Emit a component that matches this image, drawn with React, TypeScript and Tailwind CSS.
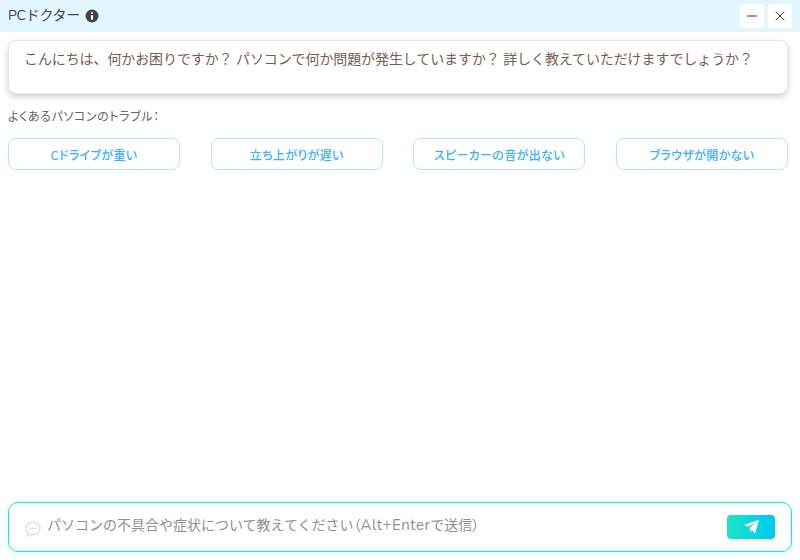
import { Minus, X } from 'lucide-react';

const troubles = ['Cドライブが重い', '立ち上がりが遅い', 'スピーカーの音が出ない', 'ブラウザが開かない'];

function InfoIcon() {
  return (
    <svg width="14" height="14" viewBox="0 0 14 14" className="shrink-0">
      <circle cx="7" cy="7" r="6.500" fill="#444444" />
      <rect x="6" y="6" width="2" height="4.800" rx=".4" fill="white" />
      <circle cx="7" cy="4" r="1.100" fill="white" />
    </svg>
  );
}

function ChatIcon() {
  return (
    <svg width="16" height="16" viewBox="0 0 16 16" fill="none" className="shrink-0">
      <path
        d="M8 1.2c3.8 0 7 2.7 7 6.2s-3.2 6.2-7 6.2c-.8 0-1.5-.1-2.2-.3L2.4 14.8l.7-3C1.8 10.700 1 9.100 1 7.400 1 3.900 4.200 1.200 8 1.200z"
        stroke="#dcdcdc"
        strokeWidth="1.3"
      />
      <circle cx="5.200" cy="7.400" r=".8" fill="#cfcfcf" />
      <circle cx="8" cy="7.400" r=".8" fill="#cfcfcf" />
      <circle cx="10.800" cy="7.400" r=".8" fill="#cfcfcf" />
    </svg>
  );
}

function SendIcon() {
  return (
    <svg width="15" height="14" viewBox="0 0 15 14" fill="white">
      <path d="M15 0 11 13.500 7.800 9.800 6.500 12.500 5.500 7.800 12 2.500 3.800 6.800 0 4.700z" />
    </svg>
  );
}

export default function App() {
  return (
    <div className="flex h-[560px] w-[800px] flex-col bg-white font-['Nunito','Noto_Sans_CJK_JP','Noto_Sans',sans-serif]">
      <header className="flex h-8 shrink-0 items-center justify-between bg-[#e1f6ff] pl-2 pr-[8px]">
        <div className="flex items-center gap-[5px]">
          <span className="text-sm tracking-[-0.25px] text-[#444444]">PCドクター</span>
          <InfoIcon />
        </div>
        <div className="flex gap-1">
          <button className="flex size-6 items-center justify-center rounded bg-white text-[#333333]">
            <Minus size={16} strokeWidth={1.5} />
          </button>
          <button className="flex size-6 items-center justify-center rounded bg-white text-[#333333]">
            <X size={16} strokeWidth={1.5} />
          </button>
        </div>
      </header>

      <main className="flex min-h-0 flex-1 flex-col px-2 pt-2">
        <div className="mr-1 h-[54px] shrink-0 rounded-lg border border-[#dfe8f2] bg-white py-[7px] pl-[15px] pr-4 text-sm leading-6 tracking-[-0.1px] text-[#7a5c50] shadow-[0_3px_6px_rgba(0,0,0,0.18)]">
          こんにちは、何かお困りですか？ パソコンで何か問題が発生していますか？ 詳しく教えていただけますでしょうか？
        </div>
        <p className="mt-[13px] text-xs leading-5 tracking-[0.6px] text-[#666666] [font-feature-settings:'palt']">よくあるパソコンのトラブル：</p>
        <div className="mr-1 mt-[11px] flex justify-between">
          {troubles.map((t) => (
            <button
              key={t}
              className="h-8 w-[172px] rounded-lg border border-[#aee6ff] bg-white pt-[3px] text-xs font-medium tracking-[0.35px] text-[#38b0ff] [font-feature-settings:'palt']"
            >
              {t}
            </button>
          ))}
        </div>
        <div className="flex-1" />
        <div className="mb-2 flex h-[50px] shrink-0 items-center rounded-[10px] border border-[#1de3d8] bg-white pl-4 pr-4 shadow-[0_2px_8px_rgba(30,200,230,0.15)]">
          <span className="mt-[3px]">
            <ChatIcon />
          </span>
          <span className="ml-[6px] flex-1 pb-[2px] text-sm text-[#8f8f8f]">
            パソコンの不具合や症状について教えてください
            <span className="[font-feature-settings:'palt']">（</span>
            <span className="text-[15px] tracking-[0.5px]">Alt+Enter</span>
            で送信
            <span className="[font-feature-settings:'palt']">）</span>
          </span>
          <button className="flex h-6 w-12 items-center justify-center rounded bg-gradient-to-r from-[#1de3c8] to-[#00c8f0]">
            <SendIcon />
          </button>
        </div>
      </main>
    </div>
  );
}
